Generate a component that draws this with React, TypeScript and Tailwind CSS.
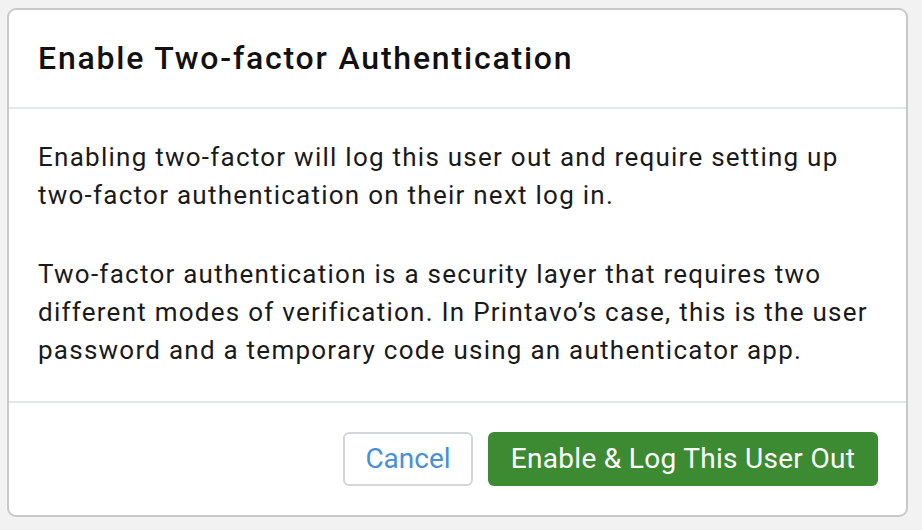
export default function App() {
  return (
    <div className="w-[922px] h-[530px] bg-[#f2f2f2] pt-[8px] pl-[7px]" style={{ fontFamily: "Roboto, 'Liberation Sans', sans-serif" }}>
      <div className="w-[901px] h-[509px] bg-white border-2 border-[#c9c9c9] rounded-[9px] flex flex-col overflow-hidden">
        <div className="h-[99px] flex items-center pl-[29px] border-b-2 border-[#e3e6ea] shrink-0">
          <h1 className="text-[32px] tracking-[1.8px] font-medium text-[#111] leading-none mb-[1px]">Enable Two-factor Authentication</h1>
        </div>
        <div className="flex-1 pl-[29px] pr-[30px] pt-[29px] text-[26px] tracking-[1.25px] leading-[38px] text-[#1a1a1a]">
          <p>Enabling two-factor will log this user out and require setting up two-factor authentication on their next log in.</p>
          <p className="mt-[41px]">Two-factor authentication is a security layer that requires two different modes of verification. In Printavo’s case, this is the user password and a temporary code using an authenticator app.</p>
        </div>
        <div className="h-[114px] shrink-0 border-t-2 border-[#e3e6ea] flex items-center justify-end gap-[15px] pr-[28px]">
          <button className="w-[130px] h-[54px] rounded-[6px] border-2 border-[#d3d7dc] text-[#4a8fd6] text-[28px] bg-white">Cancel</button>
          <button className="w-[390px] h-[54px] rounded-[6px] bg-[#3c8a32] text-white text-[28px] tracking-[0.3px]">Enable &amp; Log This User Out</button>
        </div>
      </div>
    </div>
  );
}
